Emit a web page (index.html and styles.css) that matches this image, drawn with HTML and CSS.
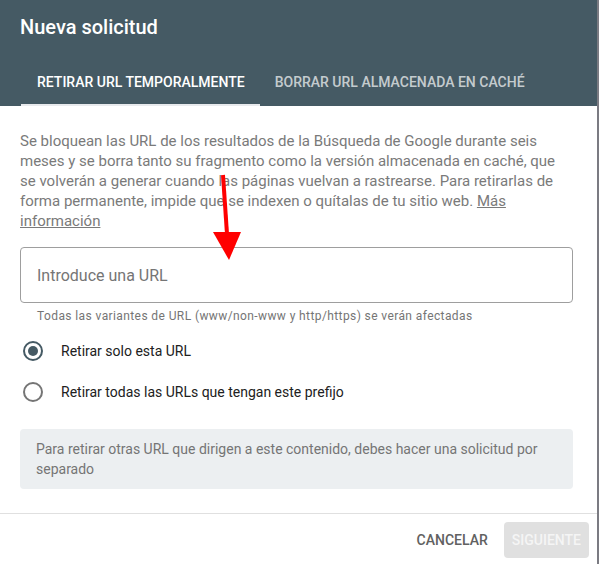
FILE: index.html
```html
<!DOCTYPE html>
<html lang="es">
<head>
    <meta charset="UTF-8">
    <meta name="viewport" content="width=device-width, initial-scale=1.0">
    <title>Nueva solicitud</title>
    <link rel="stylesheet" href="styles.css">
</head>
<body>
    <div class="dialog">
        <div class="header">
            <h1 class="title">Nueva solicitud</h1>
            <div class="tabs">
                <div class="tab active">RETIRAR URL TEMPORALMENTE</div>
                <div class="tab">BORRAR URL ALMACENADA EN CACHÉ</div>
            </div>
        </div>

        <div class="content">
            <p class="intro">Se bloquean las URL de los resultados de la Búsqueda de Google durante seis meses y se borra tanto su fragmento como la versión almacenada en caché, que se volverán a generar cuando las páginas vuelvan a rastrearse. Para retirarlas de forma permanente, impide que se indexen o quítalas de tu sitio web. <a href="#">Más información</a></p>

            <div class="field">
                <input type="text" class="url-input" placeholder="Introduce una URL">
            </div>
            <p class="helper">Todas las variantes de URL (www/non-www y http/https) se verán afectadas</p>

            <div class="options">
                <label class="option">
                    <span class="radio checked"></span>
                    Retirar solo esta URL
                </label>
                <label class="option">
                    <span class="radio"></span>
                    Retirar todas las URLs que tengan este prefijo
                </label>
            </div>

            <div class="notice">Para retirar otras URL que dirigen a este contenido, debes hacer una solicitud por separado</div>
        </div>

        <div class="footer">
            <button class="btn">CANCELAR</button>
            <button class="btn disabled">SIGUIENTE</button>
        </div>

        <svg class="arrow" width="60" height="100" viewBox="0 0 60 100">
            <line x1="13" y1="15" x2="17" y2="74" stroke="#ff0000" stroke-width="4"/>
            <polygon points="3,72 31,72 19,100" fill="#ff0000"/>
        </svg>
    </div>
</body>
</html>
```

FILE: styles.css
```css
body {
    margin: 0;
    background-color: #7b7b82;
    font-family: Roboto, "Noto Sans", sans-serif;
}

.dialog {
    position: relative;
    width: 597px;
    height: 564px;
    background-color: #ffffff;
    display: flex;
    flex-direction: column;
}

.header {
    background-color: #455a64;
    color: #ffffff;
}

.title {
    margin: 0;
    padding: 13px 20px 0;
    font-size: 20px;
    font-weight: 500;
    line-height: 28px;
    height: 45px;
}

.tabs {
    display: flex;
    padding-left: 21px;
}

.tab {
    padding: 0 15px;
    height: 48px;
    line-height: 48px;
    font-size: 14px;
    font-weight: 500;
    color: rgba(255, 255, 255, 0.7);
    box-sizing: border-box;
    border-bottom: 2px solid transparent;
}

.tab.active {
    padding-left: 16px;
    color: #ffffff;
    border-bottom-color: #e8eaed;
}

.content {
    padding: 25px 24px 0 20px;
    flex: 1;
}

.intro {
    margin: 0;
    font-size: 15px;
    line-height: 20px;
    color: #7a7a7a;
}

.intro a {
    color: #7a7a7a;
}

.field {
    margin-top: 16px;
}

.url-input {
    width: 553px;
    height: 56px;
    box-sizing: border-box;
    border: 1px solid #9e9e9e;
    border-radius: 4px;
    padding: 0 16px;
    font-family: inherit;
    font-size: 16px;
    color: #212121;
    outline: none;
}

.url-input::placeholder {
    color: #757575;
}

.helper {
    margin: 5px 0 0 17px;
    font-size: 12px;
    line-height: 16px;
    color: #757575;
    letter-spacing: 0.4px;
}

.options {
    margin-top: 6px;
}

.option {
    display: flex;
    align-items: center;
    height: 41px;
    font-size: 14px;
    color: #212121;
}

.radio {
    width: 20px;
    height: 20px;
    box-sizing: border-box;
    border: 2px solid #757575;
    border-radius: 50%;
    margin: 0 18px 0 3px;
    display: flex;
    align-items: center;
    justify-content: center;
}

.radio.checked {
    border-color: #455a64;
}

.radio.checked::after {
    content: "";
    width: 10px;
    height: 10px;
    border-radius: 50%;
    background-color: #455a64;
}

.notice {
    margin-top: 17px;
    width: 553px;
    box-sizing: border-box;
    padding: 10px 16px;
    background-color: #eceff1;
    border-radius: 4px;
    font-size: 14px;
    line-height: 20px;
    color: #757575;
}

.footer {
    border-top: 1px solid #e0e0e0;
    display: flex;
    justify-content: flex-end;
    gap: 8px;
    padding: 8px 8px 6px;
}

.btn {
    height: 36px;
    padding: 0 8px;
    border: none;
    border-radius: 4px;
    background: none;
    font-family: inherit;
    font-size: 14px;
    font-weight: 500;
    color: #616161;
}

.btn.disabled {
    background-color: #e0e0e0;
    color: #f5f5f5;
}

.arrow {
    position: absolute;
    left: 210px;
    top: 160px;
}
```
